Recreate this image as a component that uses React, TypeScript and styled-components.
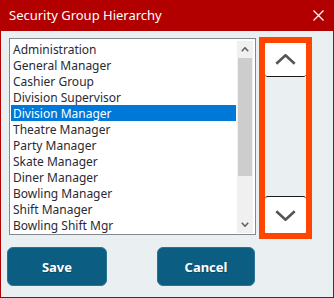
import React from "react";
import styled, { createGlobalStyle } from "styled-components";

const GlobalStyle = createGlobalStyle`
  html, body {
    margin: 0;
    padding: 0;
    background: #ffffff;
  }
  * {
    box-sizing: border-box;
  }
`;

const items = [
  "Administration",
  "General Manager",
  "Cashier Group",
  "Division Supervisor",
  "Division Manager",
  "Theatre Manager",
  "Party Manager",
  "Skate Manager",
  "Diner Manager",
  "Bowling Manager",
  "Shift Manager",
  "Bowling Shift Mgr",
];

const Dialog = styled.div`
  width: 334px;
  height: 298px;
  display: flex;
  flex-direction: column;
  border: 1px solid #b20000;
  border-top: none;
  background: #eaeff2;
  font-family: "Noto Sans", "DejaVu Sans", sans-serif;
`;

const TitleBar = styled.div`
  height: 31px;
  margin: 0 -1px;
  background: #b20000;
  display: flex;
  align-items: center;
  justify-content: space-between;
  padding: 0 10px 1px 9px;
  color: #ffffff;
  font-size: 13px;
`;

const CloseIcon = styled.svg`
  width: 11px;
  height: 11px;
  display: block;
`;

const Body = styled.div`
  flex: 1;
  display: flex;
  flex-direction: column;
  padding: 6px 6px 0 6px;
`;

const TopRow = styled.div`
  display: flex;
  align-items: flex-start;
`;

const ListBox = styled.div`
  width: 247px;
  height: 197px;
  margin: 1px 0 0 2px;
  border: 1px solid #828790;
  background: #ffffff;
  padding: 2px 2px 1px 1px;
  display: flex;
`;

const Items = styled.div`
  flex: 1;
  overflow: hidden;
`;

const Row = styled.div<{ $selected?: boolean }>`
  height: 16px;
  line-height: 17px;
  padding-left: 2px;
  font-size: 12px;
  white-space: nowrap;
  color: ${(p) => (p.$selected ? "#ffffff" : "#2a2a33")};
  background: ${(p) => (p.$selected ? "#0078d7" : "transparent")};
`;

const ScrollBar = styled.div`
  width: 16px;
  margin-left: 1px;
  background: #f0f0f0;
  display: flex;
  flex-direction: column;
`;

const ScrollArrow = styled.div`
  height: 17px;
  display: flex;
  align-items: center;
  justify-content: center;
`;

const Thumb = styled.div`
  height: 118px;
  margin: 0 1px;
  background: #cdcdcd;
`;

const Track = styled.div`
  flex: 1;
`;

const OrderFrame = styled.div`
  width: 53px;
  height: 202px;
  margin-left: 3px;
  border: 6px solid #ff4500;
  display: flex;
  flex-direction: column;
  justify-content: space-between;
`;

const MoveButton = styled.button<{ $edge: "top" | "bottom" }>`
  width: 41px;
  height: ${(p) => (p.$edge === "bottom" ? "34px" : "37px")};
  padding: 0;
  border: none;
  ${(p) => (p.$edge === "bottom" ? "border-bottom" : "border-top")}: 1px solid #1a1a1a;
  border-radius: 3px;
  background: #ffffff;
  display: flex;
  align-items: center;
  justify-content: center;
  cursor: pointer;
`;

const ButtonRow = styled.div`
  display: flex;
  gap: 50px;
  margin-top: 8px;
`;

const ActionButton = styled.button<{ $width: number }>`
  width: ${(p) => p.$width}px;
  height: 39px;
  border: 1px solid #2b7394;
  border-radius: 6px;
  background: #0b5e82;
  color: #ffffff;
  font-family: "Noto Sans", "DejaVu Sans", sans-serif;
  font-size: 13px;
  font-weight: 700;
  text-shadow: 1px 1px 0 rgba(0, 0, 0, 0.25);
  cursor: pointer;
`;

const Chevron: React.FC<{ up?: boolean; w: number; h: number; stroke: number; color: string }> = ({
  up,
  w,
  h,
  stroke,
  color,
}) => (
  <svg width={w} height={h} viewBox={`0 0 ${w} ${h}`}>
    <polyline
      points={
        up
          ? `${stroke / 2},${h - stroke / 2} ${w / 2},${stroke / 2} ${w - stroke / 2},${h - stroke / 2}`
          : `${stroke / 2},${stroke / 2} ${w / 2},${h - stroke / 2} ${w - stroke / 2},${stroke / 2}`
      }
      fill="none"
      stroke={color}
      strokeWidth={stroke}
    />
  </svg>
);

export default function App() {
  return (
    <>
      <GlobalStyle />
      <Dialog>
        <TitleBar>
          <span>Security Group Hierarchy</span>
          <CloseIcon viewBox="0 0 11 11">
            <path d="M0.5 0.5 L10.5 10.5 M10.5 0.5 L0.5 10.5" stroke="#ffffff" strokeWidth="1.2" />
          </CloseIcon>
        </TitleBar>
        <Body>
          <TopRow>
            <ListBox>
              <Items>
                {items.map((name) => (
                  <Row key={name} $selected={name === "Division Manager"}>
                    {name}
                  </Row>
                ))}
              </Items>
              <ScrollBar>
                <ScrollArrow>
                  <Chevron up w={8} h={5} stroke={1.6} color="#606060" />
                </ScrollArrow>
                <Thumb />
                <Track />
                <ScrollArrow>
                  <Chevron w={8} h={5} stroke={1.6} color="#606060" />
                </ScrollArrow>
              </ScrollBar>
            </ListBox>
            <OrderFrame>
              <MoveButton $edge="bottom" aria-label="Move up">
                <Chevron up w={21} h={11} stroke={2.6} color="#555555" />
              </MoveButton>
              <MoveButton $edge="top" aria-label="Move down">
                <Chevron w={21} h={11} stroke={2.6} color="#555555" />
              </MoveButton>
            </OrderFrame>
          </TopRow>
          <ButtonRow>
            <ActionButton $width={100}>Save</ActionButton>
            <ActionButton $width={98}>Cancel</ActionButton>
          </ButtonRow>
        </Body>
      </Dialog>
    </>
  );
}
